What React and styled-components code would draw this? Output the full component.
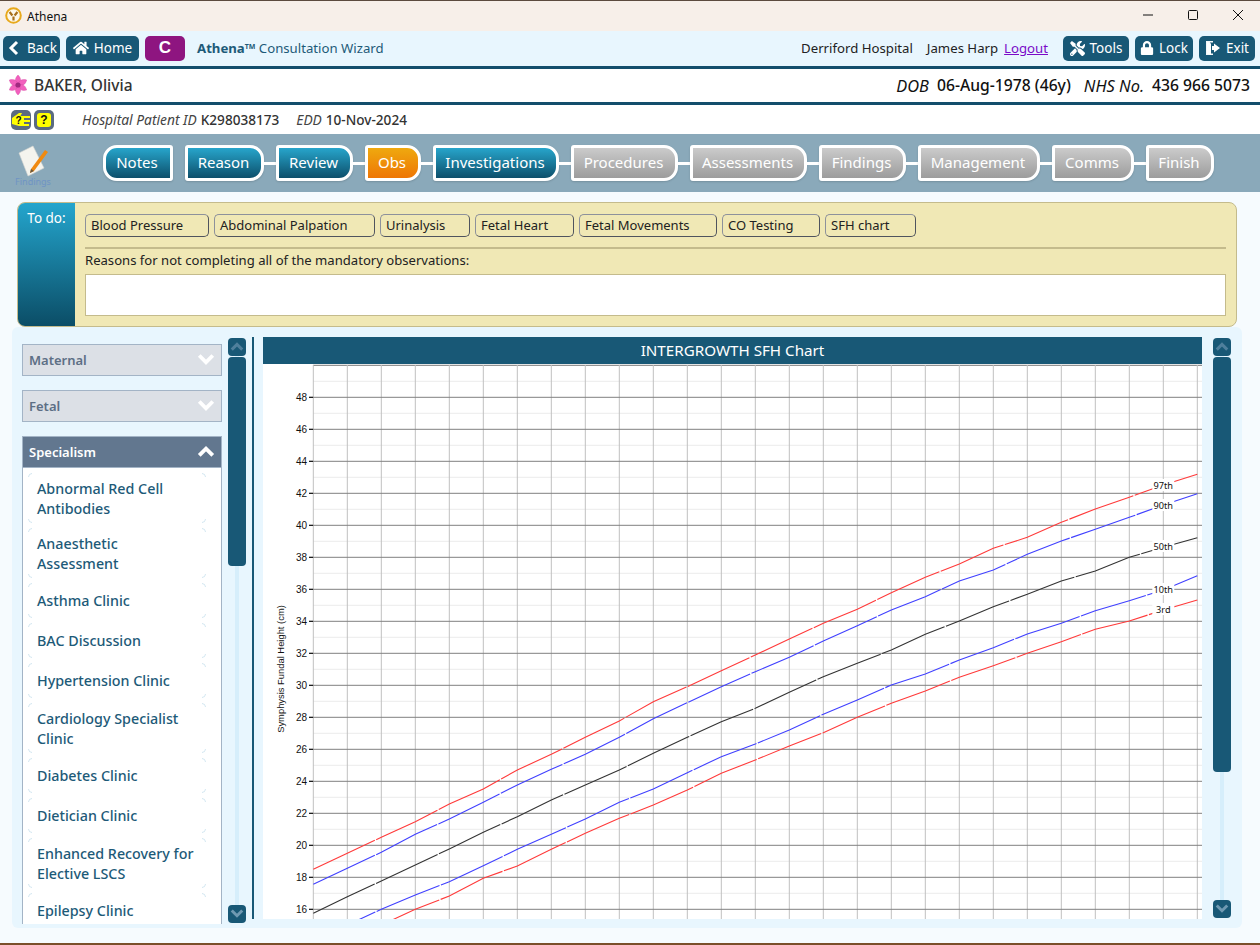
import React from 'react';
import styled, { createGlobalStyle } from 'styled-components';
import { FaHome, FaTools, FaLock } from 'react-icons/fa';

const Global = createGlobalStyle`
  html, body { margin: 0; padding: 0; background: #f6fbfe; }
  body { font-family: "Noto Sans", "Open Sans", sans-serif; }
  * { box-sizing: border-box; }
`;

const Win = styled.div`
  width: 1260px; height: 945px; overflow: hidden; display: flex; flex-direction: column;
  border-top: 1px solid #5c4a3e; border-bottom: 2px solid #7a4f2a;
  font-size: 14px;
`;
const TitleBar = styled.header`
  height: 30px; flex: none; background: #f7efe9; display: flex; align-items: center; padding-left: 5px;
  color: #111; font-size: 12px; font-family: "Noto Sans", sans-serif;
  & > svg { margin-bottom: 2px; }
`;
const AppName = styled.span`margin-left: 5px;`;
const Spacer = styled.div`flex: 1;`;
const WinControls = styled.div`display: flex; align-items: center; gap: 33px; margin: 0 16px 2px 0; svg { display: block; }`;

const NavBar = styled.nav`
  height: 38px; flex: none; background: #e8f6fe; border-bottom: 3px solid #134e6c;
  display: flex; align-items: center; padding: 0 5px 0 3px; gap: 6px;
`;
const NavButton = styled.button`
  width: ${p => p.$w}px; height: 25px; border: 0; border-radius: 5px; padding: 0 0 1px;
  background: ${p => p.$bg || '#185876'}; color: #fff; font: 400 13.5px "Noto Sans", sans-serif;
  display: flex; align-items: center; justify-content: center; gap: 5px;
`;
const CLabel = styled.span`font: 700 17px "Liberation Sans", sans-serif;`;
const Title = styled.div`margin: 0 0 1px 6px; color: #1d5a78; font-size: 13.2px; b { font-weight: 700; } sup { font-size: 7px; font-weight: 700; vertical-align: 4px; line-height: 0; }`;
const Place = styled.span`color: #222; font-size: 13.2px; margin: 0 8px 1px 0;`;
const LogoutLink = styled.a`color: #7a0ac8; text-decoration: underline; font-size: 13.2px; margin: 0 9px 1px -8px;`;

const PatientBar = styled.section`
  height: 36px; flex: none; background: #fff; border-bottom: 3px solid #134e6c;
  display: flex; align-items: center; padding: 0 10px 1px 8px;
`;
const PatientName = styled.span`margin-left: 6px; font-size: 15.5px; font-weight: 500; color: #333;`;
const DemoLabel = styled.i`font-size: 16.4px; color: #111; margin-left: 13px;`;
const DemoValue = styled.span`font-size: 15.7px; font-weight: 500; color: #111; margin-left: 8px;`;

const InfoBar = styled.section`
  height: 29px; flex: none; background: #fff; display: flex; align-items: center; padding-left: 11px; color: #333;
`;
const HelpIcon = styled.span`
  width: 20px; height: 20px; border-radius: 5px; background: #5b6b80; display: flex; align-items: center; justify-content: center;
  margin-right: 3px; svg { display: block; }
`;
const HelpGlyph = styled.span`
  width: 14px; height: 14px; background: #ffff00; border-radius: 3px; color: #111; font: 700 12px/14px "Liberation Sans", sans-serif; text-align: center;
`;
const InfoLabel = styled.i`margin-left: ${p => p.$ml || 0}px; color: #444; font-size: 13.8px;`;
const InfoValue = styled.span`font-weight: 500; margin-left: 4px; color: #333; font-size: 13.6px;`;

const StepBar = styled.section`
  height: 58px; flex: none; background: #8aa9ba; display: flex; align-items: center; padding-left: 13px;
`;
const NoteIcon = styled.div`
  width: 40px; margin-right: 50px; display: flex; flex-direction: column; align-items: center; margin-top: 4px;
  svg { display: block; }
`;
const NoteCaption = styled.span`font-size: 9px; line-height: 10px; color: #6f94c4; margin-top: -1px;`;
const Step = styled.div`
  width: ${p => p.$w}px; height: 36px; border: 3px solid #fff; color: #fff; font-size: 15px; flex: none; padding: 0 2px 2px 0;
  display: flex; align-items: center; justify-content: center; box-shadow: 0 1px 2px rgba(0,0,0,.15);
  border-radius: ${p => p.$first ? '14px 3px 3px 14px' : '3px 14px 14px 3px'};
  background: ${p => p.$kind === 'blue' ? 'linear-gradient(#27a5cb, #0d4f6b)' : p.$kind === 'orange' ? 'linear-gradient(#efa90f, #ee7605)' : 'linear-gradient(#cbcbcb, #9c9c9c)'};
`;
const Link = styled.div`width: 12px; height: 3px; background: ${p => p.$on ? '#fff' : 'transparent'}; flex: none;`;

const Body = styled.main`flex: 1; background: #f6fbfe; padding-top: 10px; min-height: 0;`;
const Todo = styled.section`
  margin: 0 23px 0 17px; height: 125px; display: flex; background: #f0e8b5; border: 1px solid #c4bb8c; border-radius: 8px; overflow: hidden;
`;
const TodoHead = styled.div`
  width: 57px; flex: none; background: linear-gradient(#24a5cd, #0b4d66); color: #fff; font-size: 13.5px; text-align: center; padding-top: 6px;
`;
const TodoBody = styled.div`flex: 1; padding: 11px 10px 0 10px;`;
const Chips = styled.div`display: flex; gap: 5px;`;
const Chip = styled.div`
  width: ${p => p.$w}px; height: 23px; padding-left: 5px; line-height: 20px; font-size: 13px; color: #222; white-space: nowrap;
  border: 1px solid #8d919b; border-right-color: #50545e; border-bottom-color: #50545e; border-radius: 5px;
`;
const Rule = styled.div`height: 2px; background: #c4bb8c; margin-top: 10px;`;
const ReasonLabel = styled.div`font-size: 13.1px; color: #222; margin-top: 1px; line-height: 20px;`;
const ReasonBox = styled.div`height: 42px; background: #fff; border: 1px solid #c4bb8c; margin-top: 4px;`;

const Main = styled.section`
  margin: 0 18px 0 12px; height: 601px; background: #e8f6fe; border-radius: 6px; display: flex; padding: 10px 0 0 10px;
`;
const Side = styled.div`
  width: 200px; height: 580px; margin-top: 7px; overflow: hidden; flex: none; display: flex; flex-direction: column; gap: 14px;
`;
const Section = styled.div`display: flex; flex-direction: column;`;
const SectionHead = styled.div`
  height: 32px; flex: none; display: flex; align-items: center; justify-content: space-between; padding: 0 6px 0 6px;
  font-size: 13px; font-weight: 600; border: 1px solid #a3b4c6;
  background: ${p => p.$open ? '#62778f' : '#dce0e6'}; color: ${p => p.$open ? '#fff' : '#5d6f85'};
  svg { display: block; }
`;
const List = styled.ul`
  list-style: none; margin: 0; padding: 5px 15px 0 5px; background: #fff; border-left: 1px solid #a3b4c6; border-right: 1px solid #a3b4c6;
  display: flex; flex-direction: column; gap: 5px;
`;
const Item = styled.li`
  position: relative; min-height: 35px; padding: ${p => p.$two ? '6px 9px 4px' : '5px 9px'}; line-height: 20px; color: #1d5a78; font-size: 14.3px; font-weight: 500;
  display: flex; align-items: center; flex: none;
  &::before {
    content: ""; position: absolute; inset: 0; border: 1px solid #cfe4ef; border-radius: 4px;
    -webkit-mask:
      linear-gradient(#000 0 0) left top / 4px 4px no-repeat,
      linear-gradient(#000 0 0) right top / 4px 4px no-repeat,
      linear-gradient(#000 0 0) left bottom / 4px 4px no-repeat,
      linear-gradient(#000 0 0) right bottom / 4px 4px no-repeat;
  }
`;
const Scroll = styled.div`
  width: 18px; height: ${p => p.$h}px; flex: none; margin: 1px 0 0 ${p => p.$ml}px; display: flex; flex-direction: column;
  background: linear-gradient(90deg, transparent 7px, #d6eefb 7px, #d6eefb 11px, transparent 11px);
`;
const ScrollBtn = styled.div`
  width: 18px; height: 18px; flex: none; border-radius: 4px; background: #185876; display: flex; align-items: center; justify-content: center;
  margin-top: ${p => p.$end ? 'auto' : 0};
  svg { display: block; }
`;
const Thumb = styled.div`width: 18px; height: ${p => p.$h}px; flex: none; margin-top: 1px; border-radius: 4px; background: #185876;`;
const Divider = styled.div`width: 1.5px; height: 582px; flex: none; background: #185876; margin-left: 6px;`;
const ChartCol = styled.div`width: 939px; flex: none; margin-left: 9.5px; display: flex; flex-direction: column; height: 582px;`;
const ChartHead = styled.div`height: 27px; flex: none; background: #185876; color: #fff; text-align: center; font-size: 15.2px; line-height: 27px;`;
const ChartSvg = styled.svg`display: block; background: #fff; flex: none;`;

const steps = [
  ['Notes', 70, 'blue', 0], ['Reason', 79, 'blue', 0], ['Review', 77, 'blue', 1], ['Obs', 56, 'orange', 1],
  ['Investigations', 126, 'blue', 1], ['Procedures', 107, 'gray', 1], ['Assessments', 117, 'gray', 1], ['Findings', 87, 'gray', 1],
  ['Management', 122, 'gray', 1], ['Comms', 82, 'gray', 1], ['Finish', 68, 'gray', 1],
];
const chips = [['Blood Pressure', 124], ['Abdominal Palpation', 161], ['Urinalysis', 90], ['Fetal Heart', 99], ['Fetal Movements', 138], ['CO Testing', 98], ['SFH chart', 91]];
const items = [['Abnormal Red Cell Antibodies', 1], ['Anaesthetic Assessment', 1], ['Asthma Clinic'], ['BAC Discussion'], ['Hypertension Clinic'], ['Cardiology Specialist Clinic', 1], ['Diabetes Clinic'], ['Dietician Clinic'], ['Enhanced Recovery for Elective LSCS', 1], ['Epilepsy Clinic']];

const curves = [
  { c: '#ff3a3a', p: [869.3,853.3,837.3,821.7,804,789,770,754.3,737.3,721,701.7,686.7,670.7,655,639,623.3,609.3,592.7,577.3,564,548.3,537.3,522.3,509,497.3,485,474.3] },
  { c: '#4040ff', p: [884.3,868.3,852.3,834.3,819,802.3,785,769.3,754.3,737.3,718.7,702.7,686.7,671.7,657.3,641,625.7,610,596.7,581,570,554.3,541,529.3,517.3,505,493.7] },
  { c: '#333333', p: [913.3,896.7,881,865,849,832.3,816.7,800,785,770,753.3,737.3,721.7,708.3,692.3,676.7,663.3,650,634.3,621,606.7,594.3,581,571,557.3,547.3,537.7] },
  { c: '#4040ff', p: [940,925,909.3,895,881.7,865.7,849.3,834.3,819,802.3,789,772.7,756.7,744,730,714.3,700,685,674,660,647.7,634,623.3,610.7,600.7,590,575.7] },
  { c: '#ff3a3a', p: [955,940,925,909.3,896,878.3,866,849.3,833.3,818.3,805,790,773.3,760,746,732.7,717.3,703.3,691,677.3,665.7,653.3,641.7,629.3,621,610,600] },
];
const labels = [['97th', 485], ['90th', 505], ['50th', 546], ['10th', 589], ['3rd', 609]];
const X0 = 263, Y0 = 364;
const px = i => 313.3 - X0 + i * 34;
const py = v => 397.3 - Y0 + (48 - v) * 16;

function Chart() {
  const minor = [], major = [];
  for (let v = 14; v <= 50; v++) {
    if (v % 2) minor.push(v); else if (v <= 48) major.push(v);
  }
  return (
    <ChartSvg width="939" height="555" viewBox="0 0 939 555">
      {minor.map(v => <line key={v} x1={50} x2={939} y1={py(v)} y2={py(v)} stroke="#ececec" strokeWidth="1" />)}
      <line x1={50} x2={939} y1={1.3} y2={1.3} stroke="#777" strokeWidth="1" />
      {Array.from({ length: 27 }, (_, i) => <line key={i} x1={px(i)} x2={px(i)} y1={1} y2={555} stroke="#c0c0c0" strokeWidth="1" />)}
      {major.map(v => (
        <g key={v}>
          <line x1={46} x2={939} y1={py(v)} y2={py(v)} stroke="#808080" strokeWidth="1" />
          <line x1={46} x2={50} y1={py(v)} y2={py(v)} stroke="#000" strokeWidth="1" />
          <text x={44} y={py(v) + 3.5} textAnchor="end" fontSize="10" fontFamily="Liberation Sans, sans-serif" fill="#111">{v}</text>
        </g>
      ))}
      <text transform={`translate(21 305) rotate(-90)`} textAnchor="middle" fontSize="9.4" fontFamily="Liberation Sans, sans-serif" fill="#111">Symphysis Fundal Height (cm)</text>
      {curves.map((k, n) => (
        <polyline key={n} fill="none" stroke={k.c} strokeWidth="1.1" strokeDasharray="68 1.5" points={k.p.map((y, i) => `${px(i)},${y - Y0}`).join(' ')} />
      ))}
      {labels.map(([t, y]) => (
        <g key={t}>
          <rect x={px(25) - 11} y={y - Y0 - 6} width="22" height="12" fill="#fff" />
          <text x={px(25)} y={y - Y0 + 3.5} textAnchor="middle" fontSize="9.2" fontFamily="Noto Sans, sans-serif" fill="#111">{t}</text>
        </g>
      ))}
    </ChartSvg>
  );
}

const Chevron = ({ dir, size = 18, color = '#fff', sw = 3.4 }) => {
  const pts = { down: '2,4 8,10 14,4', up: '2,11 8,5 14,11', left: '11,2 5,8 11,14' }[dir];
  return (
    <svg width={size} height={size} viewBox="0 0 16 16">
      <polyline points={pts} fill="none" stroke={color} strokeWidth={sw} />
    </svg>
  );
};
const Logo = () => (
  <svg width="17" height="17" viewBox="0 0 17 17">
    <circle cx="8.5" cy="8.5" r="7.3" fill="#fdf8ea" stroke="#e8a91c" strokeWidth="2" />
    <path d="M4.6 5 L7.4 8.5 M12.4 5 L9.6 8.5 M8.5 9.5 V13.5" fill="none" stroke="#a8701c" strokeWidth="2.2" />
  </svg>
);
const Flower = () => (
  <svg width="20" height="20" viewBox="0 0 20 20">
    {[0, 60, 120, 180, 240, 300].map(a => (
      <path key={a} d="M10 0 C13.5 3.5 13.5 7 10 10 C6.5 7 6.5 3.5 10 0 Z" fill="#f25fbd" stroke="#d64aa4" strokeWidth="0.4" transform={`rotate(${a} 10 10)`} />
    ))}
    <circle cx="10" cy="10" r="2.6" fill="#a02a80" />
  </svg>
);
const Hand = () => (
  <svg width="20" height="20" viewBox="0 0 20 20">
    <path d="M1 8 L8 3 H11 L9.5 6 H19 V8 H13 V10 H19 V12 H13 V14 H18 V16 H8 L1 14 Z" fill="#ffff00" />
    <text x="4.5" y="13.5" fontSize="10" fontWeight="700" fontFamily="Liberation Sans, sans-serif" fill="#111">?</text>
  </svg>
);
const Note = () => (
  <svg width="34" height="34" viewBox="0 0 34 34">
    <path d="M3 9 L17 2 L28 24 L12 32 Z" fill="#f4f4ee" stroke="#d5d5d0" strokeWidth="0.6" />
    <path d="M15 25 L29 6 L32 8 L18 27 L14 29 Z" fill="#f08a10" />
    <path d="M14 29 L15 25 L18 27 Z" fill="#6a5a40" />
  </svg>
);
const ExitIcon = () => (
  <svg width="16" height="16" viewBox="0 0 16 16" fill="#fff">
    <path d="M1 1 H8 V2.5 H5 V13.5 H8 V15 H1 Z" opacity=".95" />
    <path d="M2 2 L6 3.5 V15 L2 13.5 Z" />
    <path d="M9 3.5 L15 8 L9 12.5 V10 H7 V6 H9 Z" />
  </svg>
);
const WinMin = () => <svg width="12" height="12"><path d="M1 6 H11" stroke="#111" /></svg>;
const WinMax = () => <svg width="12" height="12"><rect x="1.5" y="1.5" width="9" height="9" rx="1" fill="none" stroke="#111" /></svg>;
const WinClose = () => <svg width="12" height="12"><path d="M1 1 L11 11 M11 1 L1 11" stroke="#111" /></svg>;

export default function App() {
  return (
    <Win>
      <Global />
      <TitleBar>
        <Logo /><AppName>Athena</AppName><Spacer />
        <WinControls><WinMin /><WinMax /><WinClose /></WinControls>
      </TitleBar>
      <NavBar>
        <NavButton $w={57}><Chevron dir="left" size={16} sw={3} />Back</NavButton>
        <NavButton $w={73}><FaHome size={16} />Home</NavButton>
        <NavButton $w={40} $bg="#8e1580"><CLabel>C</CLabel></NavButton>
        <Title><b>Athena<sup>TM</sup></b> Consultation Wizard</Title>
        <Spacer />
        <Place>Derriford Hospital</Place>
        <Place>James Harp</Place>
        <LogoutLink>Logout</LogoutLink>
        <NavButton $w={66}><FaTools size={15} />Tools</NavButton>
        <NavButton $w={58}><FaLock size={14} />Lock</NavButton>
        <NavButton $w={56}><ExitIcon />Exit</NavButton>
      </NavBar>
      <PatientBar>
        <Flower /><PatientName>BAKER, Olivia</PatientName><Spacer />
        <DemoLabel>DOB</DemoLabel><DemoValue>06-Aug-1978 (46y)</DemoValue>
        <DemoLabel>NHS No.</DemoLabel><DemoValue>436 966 5073</DemoValue>
      </PatientBar>
      <InfoBar>
        <HelpIcon><Hand /></HelpIcon>
        <HelpIcon><HelpGlyph>?</HelpGlyph></HelpIcon>
        <InfoLabel $ml={25}>Hospital Patient ID</InfoLabel><InfoValue>K298038173</InfoValue>
        <InfoLabel $ml={17}>EDD</InfoLabel><InfoValue>10-Nov-2024</InfoValue>
      </InfoBar>
      <StepBar>
        <NoteIcon><Note /><NoteCaption>Findings</NoteCaption></NoteIcon>
        {steps.map(([t, w, k, link], i) => (
          <React.Fragment key={t}>
            {i > 0 && <Link $on={!!link} />}
            <Step $w={w} $kind={k} $first={i === 0}>{t}</Step>
          </React.Fragment>
        ))}
      </StepBar>
      <Body>
        <Todo>
          <TodoHead>To do:</TodoHead>
          <TodoBody>
            <Chips>{chips.map(([t, w]) => <Chip key={t} $w={w}>{t}</Chip>)}</Chips>
            <Rule />
            <ReasonLabel>Reasons for not completing all of the mandatory observations:</ReasonLabel>
            <ReasonBox />
          </TodoBody>
        </Todo>
        <Main>
          <Side>
            <Section><SectionHead>Maternal<Chevron dir="down" /></SectionHead></Section>
            <Section><SectionHead>Fetal<Chevron dir="down" /></SectionHead></Section>
            <Section>
              <SectionHead $open>Specialism<Chevron dir="up" /></SectionHead>
              <List>{items.map(([t, two]) => <Item key={t} $two={!!two}>{t}</Item>)}</List>
            </Section>
          </Side>
          <Scroll $h={585} $ml={6}>
            <ScrollBtn><Chevron dir="up" size={14} color="#4f7f9c" /></ScrollBtn>
            <Thumb $h={209} />
            <ScrollBtn $end><Chevron dir="down" size={14} color="#6f99b2" /></ScrollBtn>
          </Scroll>
          <Divider />
          <ChartCol>
            <ChartHead>INTERGROWTH SFH Chart</ChartHead>
            <Chart />
          </ChartCol>
          <Scroll $h={580} $ml={11}>
            <ScrollBtn><Chevron dir="up" size={14} color="#4f7f9c" /></ScrollBtn>
            <Thumb $h={415} />
            <ScrollBtn $end><Chevron dir="down" size={14} color="#6f99b2" /></ScrollBtn>
          </Scroll>
        </Main>
      </Body>
    </Win>
  );
}
